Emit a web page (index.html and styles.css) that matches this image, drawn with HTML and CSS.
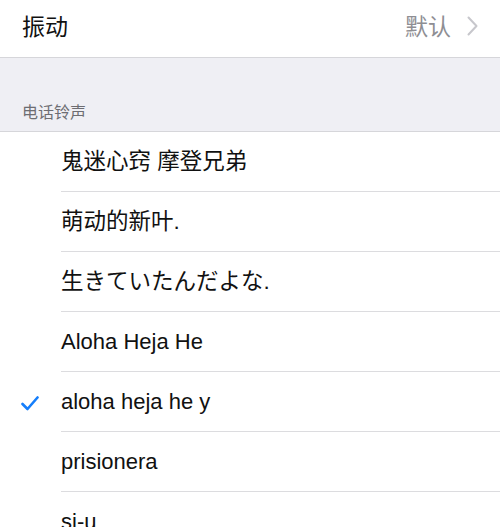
FILE: index.html
```html
<!DOCTYPE html>
<html lang="zh">
<head>
<meta charset="utf-8">
<link rel="stylesheet" href="styles.css">
</head>
<body>
<div class="top-row">
  <span class="label">振动</span>
  <span class="value">默认<svg class="chev" width="11" height="20" viewBox="0 0 11 20"><path d="M1.5 1.5 L9.5 10 L1.5 18.5" fill="none" stroke="#c7c7cc" stroke-width="2" stroke-linecap="round" stroke-linejoin="round"/></svg></span>
</div>
<div class="section-header">电话铃声</div>
<ul class="list">
  <li class="item"><span class="check"></span><span class="text cjk">鬼迷心窍 摩登兄弟</span></li>
  <li class="item"><span class="check"></span><span class="text cjk">萌动的新叶.</span></li>
  <li class="item"><span class="check"></span><span class="text cjk">生きていたんだよな.</span></li>
  <li class="item"><span class="check"></span><span class="text">Aloha Heja He</span></li>
  <li class="item"><span class="check"><svg width="18" height="15" viewBox="0 0 18 15"><path d="M1.5 8 L6.5 13 L16.5 1.5" fill="none" stroke="#157efb" stroke-width="2.6" stroke-linecap="round" stroke-linejoin="round"/></svg></span><span class="text">aloha heja he y</span></li>
  <li class="item"><span class="check"></span><span class="text">prisionera</span></li>
  <li class="item"><span class="check"></span><span class="text">si-u</span></li>
</ul>
</body>
</html>
```
FILE: styles.css
```css
* { box-sizing: border-box; }
html, body { margin: 0; padding: 0; }
body {
  width: 500px;
  height: 527px;
  overflow: hidden;
  background: #efeff4;
  font-family: "Liberation Sans", "Noto Sans CJK SC", sans-serif;
  color: #111;
}
.top-row {
  height: 58px;
  background: #fff;
  border-bottom: 1px solid #d6d6da;
  display: flex;
  align-items: center;
  justify-content: space-between;
  padding: 0 22px 7px 22px;
}
.label {
  font-size: 23px;
  font-family: "Noto Sans CJK SC", sans-serif;
}
.value {
  display: flex;
  align-items: center;
  gap: 16px;
  font-size: 23px;
  color: #8e8e93;
  font-family: "Noto Sans CJK SC", sans-serif;
}
.chev { margin-top: 1px; }
.section-header {
  height: 74px;
  display: flex;
  align-items: flex-end;
  padding: 0 22px 8px 22px;
  font-size: 16px;
  color: #6d6d72;
  font-family: "Noto Sans CJK SC", sans-serif;
  border-bottom: 1px solid #d6d6da;
}
.list {
  list-style: none;
  margin: 0;
  padding: 0;
  background: #fff;
}
.item {
  height: 60px;
  display: flex;
  align-items: center;
}
.check {
  width: 61px;
  flex: none;
  display: flex;
  justify-content: flex-start;
  padding-left: 21px;
  padding-top: 2px;
}
.text {
  flex: 1;
  height: 100%;
  display: flex;
  align-items: center;
  font-size: 22px;
  border-bottom: 1px solid #dcdcdf;
}
.text.cjk {
  font-size: 22.5px;
  padding-bottom: 6px;
}
```
